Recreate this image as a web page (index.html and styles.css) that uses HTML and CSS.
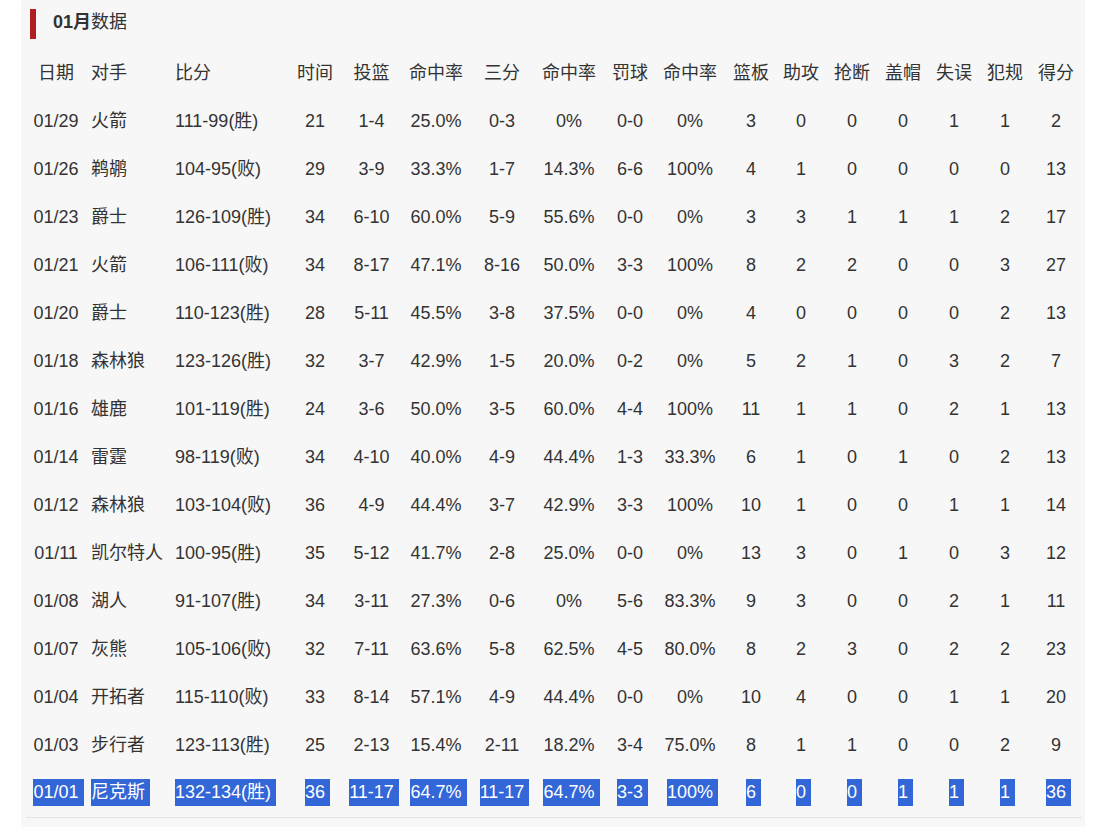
FILE: index.html
```html
<!DOCTYPE html>
<html lang="zh-CN">
<head>
<meta charset="utf-8">
<title>01月数据</title>
<link rel="stylesheet" href="styles.css">
</head>
<body>
<div class="panel">
  <div class="title"><span class="bar"></span><h2 class="title-text"><b>01月</b>数据</h2></div>
  <table class="stats">
    <colgroup>
      <col class="w60"><col class="w84"><col class="w117"><col class="w56"><col class="w57"><col class="w72"><col class="w60"><col class="w74"><col class="w48"><col class="w72"><col class="w50"><col class="w50"><col class="w52"><col class="w50"><col class="w52"><col class="w50"><col class="w52">
    </colgroup>
    <thead>
      <tr><th>日期</th><th class="l">对手</th><th class="l">比分</th><th>时间</th><th>投篮</th><th>命中率</th><th>三分</th><th>命中率</th><th>罚球</th><th>命中率</th><th>篮板</th><th>助攻</th><th>抢断</th><th>盖帽</th><th>失误</th><th>犯规</th><th>得分</th></tr>
    </thead>
    <tbody>
      <tr><td>01/29</td><td class="l">火箭</td><td class="l">111-99(胜)</td><td>21</td><td>1-4</td><td>25.0%</td><td>0-3</td><td>0%</td><td>0-0</td><td>0%</td><td>3</td><td>0</td><td>0</td><td>0</td><td>1</td><td>1</td><td>2</td></tr>
      <tr><td>01/26</td><td class="l">鹈鹕</td><td class="l">104-95(败)</td><td>29</td><td>3-9</td><td>33.3%</td><td>1-7</td><td>14.3%</td><td>6-6</td><td>100%</td><td>4</td><td>1</td><td>0</td><td>0</td><td>0</td><td>0</td><td>13</td></tr>
      <tr><td>01/23</td><td class="l">爵士</td><td class="l">126-109(胜)</td><td>34</td><td>6-10</td><td>60.0%</td><td>5-9</td><td>55.6%</td><td>0-0</td><td>0%</td><td>3</td><td>3</td><td>1</td><td>1</td><td>1</td><td>2</td><td>17</td></tr>
      <tr><td>01/21</td><td class="l">火箭</td><td class="l">106-111(败)</td><td>34</td><td>8-17</td><td>47.1%</td><td>8-16</td><td>50.0%</td><td>3-3</td><td>100%</td><td>8</td><td>2</td><td>2</td><td>0</td><td>0</td><td>3</td><td>27</td></tr>
      <tr><td>01/20</td><td class="l">爵士</td><td class="l">110-123(胜)</td><td>28</td><td>5-11</td><td>45.5%</td><td>3-8</td><td>37.5%</td><td>0-0</td><td>0%</td><td>4</td><td>0</td><td>0</td><td>0</td><td>0</td><td>2</td><td>13</td></tr>
      <tr><td>01/18</td><td class="l">森林狼</td><td class="l">123-126(胜)</td><td>32</td><td>3-7</td><td>42.9%</td><td>1-5</td><td>20.0%</td><td>0-2</td><td>0%</td><td>5</td><td>2</td><td>1</td><td>0</td><td>3</td><td>2</td><td>7</td></tr>
      <tr><td>01/16</td><td class="l">雄鹿</td><td class="l">101-119(胜)</td><td>24</td><td>3-6</td><td>50.0%</td><td>3-5</td><td>60.0%</td><td>4-4</td><td>100%</td><td>11</td><td>1</td><td>1</td><td>0</td><td>2</td><td>1</td><td>13</td></tr>
      <tr><td>01/14</td><td class="l">雷霆</td><td class="l">98-119(败)</td><td>34</td><td>4-10</td><td>40.0%</td><td>4-9</td><td>44.4%</td><td>1-3</td><td>33.3%</td><td>6</td><td>1</td><td>0</td><td>1</td><td>0</td><td>2</td><td>13</td></tr>
      <tr><td>01/12</td><td class="l">森林狼</td><td class="l">103-104(败)</td><td>36</td><td>4-9</td><td>44.4%</td><td>3-7</td><td>42.9%</td><td>3-3</td><td>100%</td><td>10</td><td>1</td><td>0</td><td>0</td><td>1</td><td>1</td><td>14</td></tr>
      <tr><td>01/11</td><td class="l">凯尔特人</td><td class="l">100-95(胜)</td><td>35</td><td>5-12</td><td>41.7%</td><td>2-8</td><td>25.0%</td><td>0-0</td><td>0%</td><td>13</td><td>3</td><td>0</td><td>1</td><td>0</td><td>3</td><td>12</td></tr>
      <tr><td>01/08</td><td class="l">湖人</td><td class="l">91-107(胜)</td><td>34</td><td>3-11</td><td>27.3%</td><td>0-6</td><td>0%</td><td>5-6</td><td>83.3%</td><td>9</td><td>3</td><td>0</td><td>0</td><td>2</td><td>1</td><td>11</td></tr>
      <tr><td>01/07</td><td class="l">灰熊</td><td class="l">105-106(败)</td><td>32</td><td>7-11</td><td>63.6%</td><td>5-8</td><td>62.5%</td><td>4-5</td><td>80.0%</td><td>8</td><td>2</td><td>3</td><td>0</td><td>2</td><td>2</td><td>23</td></tr>
      <tr><td>01/04</td><td class="l">开拓者</td><td class="l">115-110(败)</td><td>33</td><td>8-14</td><td>57.1%</td><td>4-9</td><td>44.4%</td><td>0-0</td><td>0%</td><td>10</td><td>4</td><td>0</td><td>0</td><td>1</td><td>1</td><td>20</td></tr>
      <tr><td>01/03</td><td class="l">步行者</td><td class="l">123-113(胜)</td><td>25</td><td>2-13</td><td>15.4%</td><td>2-11</td><td>18.2%</td><td>3-4</td><td>75.0%</td><td>8</td><td>1</td><td>1</td><td>0</td><td>0</td><td>2</td><td>9</td></tr>
      <tr class="selected"><td><span class="sel">01/01</span></td><td class="l"><span class="sel">尼克斯</span></td><td class="l"><span class="sel">132-134(胜)</span></td><td><span class="sel">36</span></td><td><span class="sel">11-17</span></td><td><span class="sel">64.7%</span></td><td><span class="sel">11-17</span></td><td><span class="sel">64.7%</span></td><td><span class="sel">3-3</span></td><td><span class="sel">100%</span></td><td><span class="sel">6</span></td><td><span class="sel">0</span></td><td><span class="sel">0</span></td><td><span class="sel">1</span></td><td><span class="sel">1</span></td><td><span class="sel">1</span></td><td><span class="sel">36</span></td></tr>
    </tbody>
  </table>
</div>
</body>
</html>
```

FILE: styles.css
```css
html, body {
  margin: 0;
  padding: 0;
  background: #ffffff;
}

body {
  font-family: "Liberation Sans", Arial, "Noto Sans CJK SC", sans-serif;
  color: #333333;
}

.panel {
  margin-left: 21px;
  width: 1064px;
  min-height: 840px;
  background: #f7f7f7;
  padding: 9px 3px 0 5px;
  box-sizing: border-box;
}

.title {
  display: flex;
  align-items: flex-start;
  height: 40px;
}

.bar {
  width: 6px;
  height: 30px;
  margin-left: 4px;
  background: #b01e23;
  flex: none;
}

.title-text {
  margin: 0 0 0 17px;
  font-size: 18px;
  line-height: 26px;
  font-weight: normal;
  color: #333333;
}

.title-text b {
  font-weight: bold;
}

.stats {
  table-layout: fixed;
  width: 1056px;
  border-collapse: collapse;
  font-size: 18px;
}

.stats th,
.stats td {
  box-sizing: border-box;
  height: 48px;
  padding: 0;
  line-height: 20px;
  text-align: center;
  vertical-align: middle;
  font-weight: normal;
  white-space: nowrap;
  color: #333333;
}

.stats th {
  padding-bottom: 1px;
}

.stats .l {
  text-align: left;
  padding-left: 5px;
}

.stats tbody tr:last-child td {
  border-bottom: 1px solid #e3e3e3;
}

.sel {
  display: inline-block;
  height: 27px;
  line-height: 27px;
  padding-right: 5px;
  margin-right: -5px;
  background: #3366d6;
  color: #ffffff;
}

.w48 { width: 48px; }
.w50 { width: 50px; }
.w52 { width: 52px; }
.w56 { width: 56px; }
.w57 { width: 57px; }
.w60 { width: 60px; }
.w72 { width: 72px; }
.w74 { width: 74px; }
.w84 { width: 84px; }
.w117 { width: 117px; }
```
